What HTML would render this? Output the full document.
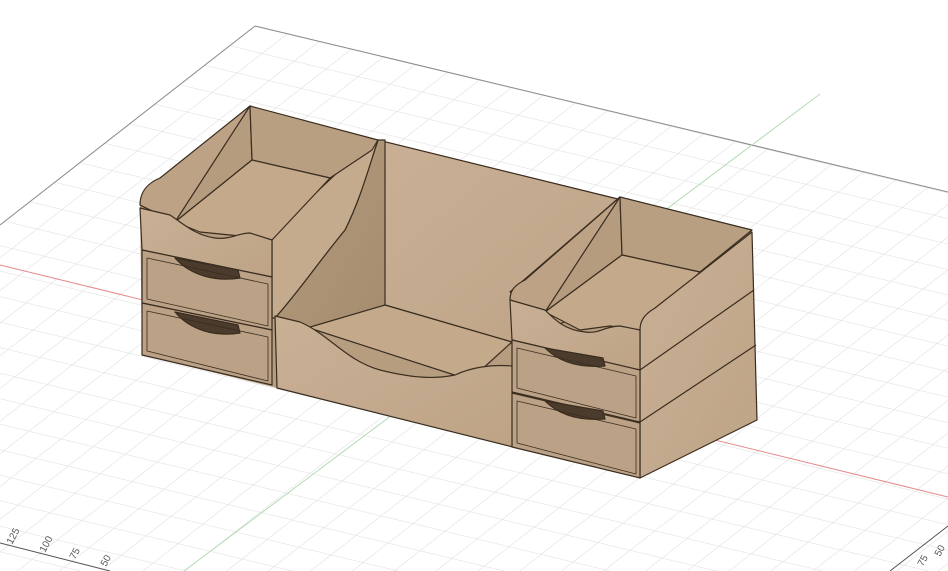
<!DOCTYPE html>
<html><head><style>html,body{margin:0;padding:0;background:#fff;overflow:hidden;width:948px;height:571px}svg{display:block}</style></head>
<body>
<svg width="948" height="571" viewBox="0 0 948 571" xmlns="http://www.w3.org/2000/svg" font-family="Liberation Sans, sans-serif" style="overflow:hidden">
<defs>
<clipPath id="c"><rect x="0" y="0" width="948" height="571"/></clipPath>
<pattern id="g" patternUnits="userSpaceOnUse" width="1" height="1" patternTransform="matrix(32 7.7 -25 19.5 255 26)">
<path d="M0 0H1M0 0V1" stroke="#dcdcdc" stroke-width="0.04" fill="none"/>
</pattern>
<linearGradient id="wood" x1="0" y1="0" x2="1" y2="1"><stop offset="0" stop-color="#c9b095"/><stop offset="1" stop-color="#bea386"/></linearGradient>
<linearGradient id="dark" x1="0" y1="0" x2="1" y2="1"><stop offset="0" stop-color="#b39a7c"/><stop offset="1" stop-color="#a68d70"/></linearGradient>
</defs>
<g clip-path="url(#c)">
<polygon points="255,26 948,192 948,571 0,571 0,225" fill="url(#g)"/>
<path d="M255,26 L948,192 M255,26 L0,225" stroke="#8a8a8a" stroke-width="1" fill="none"/>
<path d="M0,265 L948,497" stroke="#e58b8b" stroke-width="1"/>
<path d="M820,94 L184,571" stroke="#b3dcb3" stroke-width="1"/>
<path d="M0,543 L110,571" stroke="#555" stroke-width="1"/>
<path d="M890,571 L948,526" stroke="#555" stroke-width="1"/>
<g font-size="10" fill="#555">
<text transform="translate(12,545) rotate(-62)">125</text>
<text transform="translate(45,553) rotate(-62)">100</text>
<text transform="translate(75,560) rotate(-62)">75</text>
<text transform="translate(106,567) rotate(-62)">50</text>
<text transform="translate(923,567) rotate(-62)">75</text>
<text transform="translate(940,557) rotate(-62)">50</text>
</g>

<g stroke="#3a2d20" stroke-width="1.2" stroke-linejoin="round">
<polygon points="140,205 250,106 378,140 622,200 752,230 757,420 640,478 517,448 277,388 142,355" fill="#b79d80" stroke="none"/>
<polygon points="378,140 622,200 622,300 512,342 385,305" fill="url(#wood)"/>
<polygon points="300,325 385,305 512,342 470,380" fill="#c4aa8b"/>
<path d="M378,140 L385,140 L385,305 L300,330 L275,318 C300,290 320,260 345,230 C360,200 368,170 378,140Z" fill="url(#dark)"/>
<path d="M272,240 C272,228 280,220 292,215 L370,142 L378,140 C368,170 360,200 345,230 C320,260 300,290 275,318 L272,318Z" fill="#c5ab8d"/>
<path d="M275,316 L300,322 C330,335 345,360 380,370 C420,380 440,378 455,375 C470,368 490,364 512,366 L517,448 L277,388Z" fill="url(#wood)"/>

<polygon points="140,205 250,106 252,160 175,222" fill="#b59c7e"/>
<polygon points="250,106 378,140 372,150 330,178 252,160" fill="#b89f82"/>
<polygon points="175,222 252,160 330,178 272,240 240,236 200,232" fill="#c4aa8b"/>
<path d="M140,205 C140,190 150,182 160,178 L250,106 L175,222Z" fill="#bda285"/>
<path d="M140,208 L170,215 C185,225 195,235 215,238 C230,240 238,233 250,233 L272,240 L272,277 L142,250Z" fill="url(#wood)"/>
<polygon points="142,250 272,277 272,330 142,303" fill="#bba185"/>
<path d="M175,258 C190,275 215,282 240,278 L238,270 Z" fill="#4a3b2c"/>
<polygon points="147,258 268,284 268,326 147,299" fill="none" stroke-width="0.8"/>
<polygon points="142,303 272,330 272,385 142,355" fill="#bba185"/>
<path d="M175,312 C190,330 215,337 240,333 L238,325 Z" fill="#4a3b2c"/>
<polygon points="147,311 268,337 268,381 147,351" fill="none" stroke-width="0.8"/>

<polygon points="510,292 620,197 622,255 545,312" fill="#b59c7e"/>
<polygon points="620,197 752,230 700,272 622,255" fill="#b89f82"/>
<polygon points="545,312 622,255 700,272 640,330 610,326 580,330" fill="#c4aa8b"/>
<path d="M510,300 C510,290 515,285 525,280 L620,197 L545,312Z" fill="#bda285"/>
<path d="M640,330 C640,320 645,314 655,308 L752,232 L757,420 L640,478Z" fill="url(#wood)"/>
<path d="M640,370 L754,290 M640,422 L756,345" fill="none"/>
<path d="M510,300 L545,310 C555,320 565,330 585,332 C600,334 605,326 620,326 L640,330 L640,370 L512,340Z" fill="url(#wood)"/>
<polygon points="512,340 640,370 640,422 512,392" fill="#bba185"/>
<path d="M545,348 C560,363 580,368 605,366 L603,358 Z" fill="#4a3b2c"/>
<polygon points="517,348 636,376 636,418 517,388" fill="none" stroke-width="0.8"/>
<polygon points="512,393 640,423 640,478 512,447" fill="#bba185"/>
<path d="M545,401 C560,416 580,421 605,419 L603,411 Z" fill="#4a3b2c"/>
<polygon points="517,401 636,429 636,474 517,443" fill="none" stroke-width="0.8"/>
</g>
</g>
</svg>
</body></html>
